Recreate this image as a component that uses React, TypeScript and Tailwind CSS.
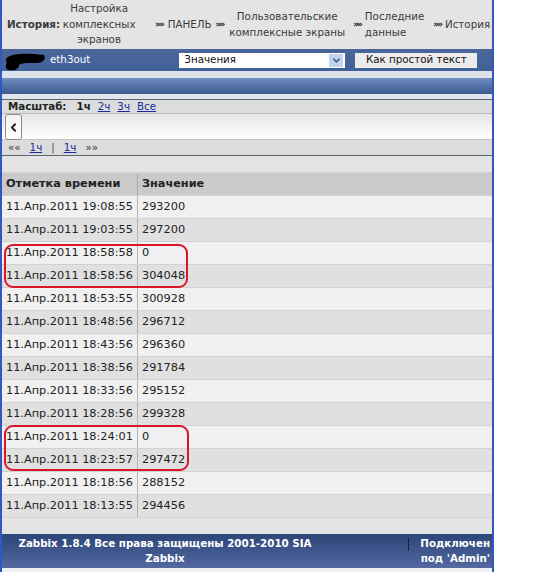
import { ChevronLeft, ChevronDown } from "lucide-react";

const rows = [
  ["11.Апр.2011 19:08:55", "293200"],
  ["11.Апр.2011 19:03:55", "297200"],
  ["11.Апр.2011 18:58:58", "0"],
  ["11.Апр.2011 18:58:56", "304048"],
  ["11.Апр.2011 18:53:55", "300928"],
  ["11.Апр.2011 18:48:56", "296712"],
  ["11.Апр.2011 18:43:56", "296360"],
  ["11.Апр.2011 18:38:56", "291784"],
  ["11.Апр.2011 18:33:56", "295152"],
  ["11.Апр.2011 18:28:56", "299328"],
  ["11.Апр.2011 18:24:01", "0"],
  ["11.Апр.2011 18:23:57", "297472"],
  ["11.Апр.2011 18:18:56", "288152"],
  ["11.Апр.2011 18:13:55", "294456"],
];

const Sep = () => <span className="text-[9px] font-bold text-[#222] tracking-[-2px]">»»</span>;

const App = () => {
  return (
    <div className="h-[573px] w-[535px] bg-white font-['DejaVu_Sans',sans-serif] text-[10.3px] text-[#222]">
      <div className="w-[494px] border-x-2 border-[#3158bf] bg-[#e4e4e4]">
        {/* breadcrumb */}
        <div className="flex h-[49px] items-center leading-[15.5px] text-[#3a3a3a]">
          <span className="ml-[5px] font-bold">История:</span>
          <span className="w-[78px] text-center">
            Настройка
            <br />
            комплексных
            <br />
            экранов
          </span>
          <span className="ml-[17px]">
            <Sep />
          </span>
          <span className="ml-[5px]">ПАНЕЛЬ</span>
          <span className="ml-[4px]">
            <Sep />
          </span>
          <span className="ml-[3px] w-[122px] text-center">
            Пользовательские
            <br />
            комплексные экраны
          </span>
          <span className="ml-[5px]">
            <Sep />
          </span>
          <span className="ml-[4px]">
            Последние
            <br />
            данные
          </span>
          <span className="ml-[9px]">
            <Sep />
          </span>
          <span className="ml-[4px]">История</span>
        </div>

        {/* item / view selector */}
        <div className="flex h-[22px] items-center bg-gradient-to-b from-[#4b6799] to-[#42609a]">
          <svg width="42" height="20" viewBox="0 0 42 20" className="ml-[2px] mt-[4px] blur-[0.5px]">
            <path d="M4 5 C10 1 24 1 40 3 C42 7 40 11 30 11 C22 11 18 11 15 13 C15 17 10 19 5 18 C1 17 1 13 3 11 C1 9 2 6 4 5Z" fill="#000" />
          </svg>
          <span className="ml-[4px] text-white">eth3out</span>
          <div className="ml-[89px] flex h-[15px] w-[166px] items-center bg-white">
            <span className="ml-[5px] flex-1 text-[#111]">Значения</span>
            <span className="flex h-[13px] w-[14px] items-center justify-center bg-[#c4d4f0] mr-[2px]">
              <ChevronDown className="h-[11px] w-[11px] text-[#4d6185]" strokeWidth={3.5} />
            </span>
          </div>
          <div className="ml-[10px] flex h-[15px] w-[122px] items-center justify-center bg-[#ececec] text-[#111]">
            Как простой текст
          </div>
        </div>
        <div className="h-[7px] bg-[#dde2ea]" />
        <div className="h-[16px] bg-gradient-to-b from-[#7490c2] via-[#5472a8] to-[#3e5b8f]" />
        <div className="h-[5px] bg-[#e2e6ec]" />

        {/* graph scale */}
        <div className="border-t border-[#5d6474]">
          <div className="flex h-[14px] items-center gap-[7px] border-b border-[#bdbdbd] bg-[#dcdcdc] pl-[6px]">
            <span className="font-bold">Масштаб:</span>
            <span className="ml-[3px] font-bold">1ч</span>
            <span className="text-[#1a2a9a] underline">2ч</span>
            <span className="text-[#1a2a9a] underline">3ч</span>
            <span className="text-[#1a2a9a] underline">Все</span>
          </div>
          <div className="flex h-[26px] border-b border-[#c4c4c4] bg-gradient-to-b from-[#e6e6e6] to-white pl-[3px]">
            <div className="flex h-[26px] w-[17px] items-center justify-center rounded-[3px] border border-[#8a8a8a] bg-gradient-to-b from-[#f4f4f4] to-white">
              <ChevronLeft className="h-[13px] w-[13px] text-[#222]" strokeWidth={3.5} />
            </div>
          </div>
          <div className="flex h-[16px] items-center gap-[9px] border-b border-[#5d6474] bg-[#dcdcdc] pl-[6px] text-[#444]">
            <span className="text-[#333]">««</span>
            <span className="text-[#1a2a9a] underline">1ч</span>
            <span>|</span>
            <span className="text-[#1a2a9a] underline">1ч</span>
            <span className="text-[#333]">»»</span>
          </div>
        </div>
        <div className="h-[16px] bg-[#e4e4e4]" />

        {/* history table */}
        <div className="relative text-[11.3px]">
          <div className="flex h-[24px] items-center border-y border-[#d4d4d4] bg-[#cacaca] pt-[1px] font-bold">
            <div className="flex h-full w-[136px] items-center border-r border-[#a8a8a8] pl-[4px]">Отметка времени</div>
            <div className="pl-[4px]">Значение</div>
          </div>
          {rows.map(([t, v], i) => (
            <div
              key={i}
              className={`flex h-[23px] items-center border-b border-[#d2d2d2] ${i % 2 === 0 ? "bg-[#f0f0f0]" : "bg-[#e0e0e0]"}`}
            >
              <div className="flex h-full w-[136px] items-center border-r border-[#b4b4b4] pl-[4px]">{t}</div>
              <div className="pl-[4px]">{v}</div>
            </div>
          ))}
          <div className="absolute left-[2px] top-[72px] h-[44px] w-[184px] rounded-[9px] border-2 border-[#dc1426]" />
          <div className="absolute left-[2px] top-[253px] h-[46px] w-[185px] rounded-[9px] border-2 border-[#dc1426]" />
        </div>
        <div className="h-[16px] bg-[#e4e4e4]" />

        {/* footer */}
        <div className="flex h-[34px] items-center bg-gradient-to-b from-[#2c4578] to-[#5369a0] font-bold leading-[15px] text-white">
          <div className="w-[326px] text-center">
            Zabbix 1.8.4 Все права защищены 2001-2010 SIA
            <br />
            Zabbix
          </div>
          <div className="ml-[80px] mb-[13px] h-[13px] w-[1px] bg-[#15203c]" />
          <div className="flex-1 pr-[2px] text-right">
            Подключен
            <br />
            под 'Admin'
          </div>
        </div>
        <div className="h-[4px] bg-[#eef0f4]" />
      </div>
    </div>
  );
};

export default App;
